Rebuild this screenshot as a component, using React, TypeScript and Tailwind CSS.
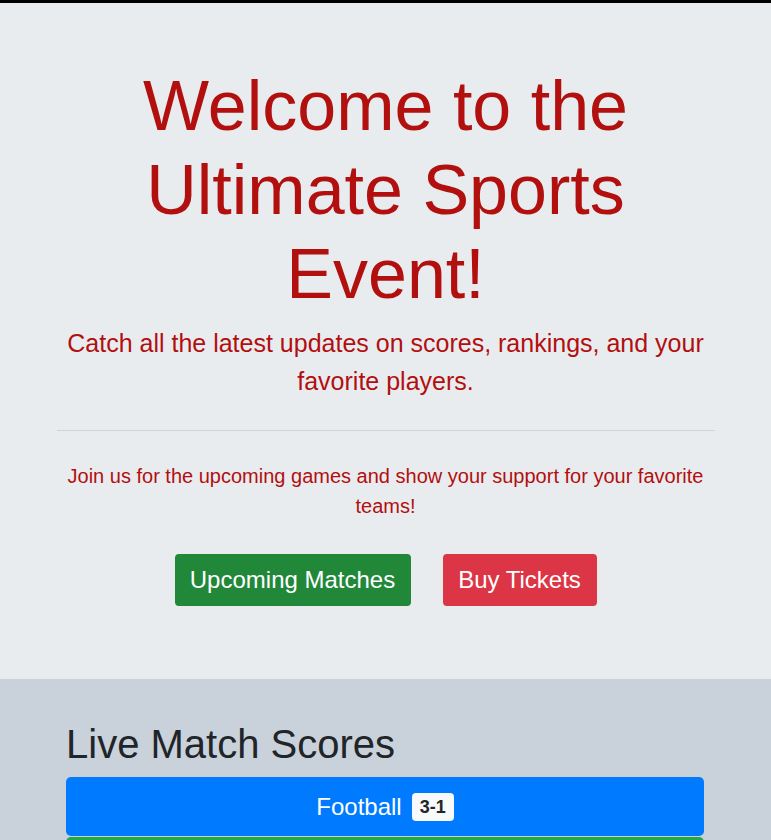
export default function App() {
  const font = { fontFamily: '"Liberation Sans", Arial, sans-serif' };
  return (
    <div style={font} className="w-full min-h-[840px] bg-[#c9d2da]">
      <div className="h-[3px] bg-black" />
      <section className="bg-[#e9ecef] pt-[61px] pb-[73px] flex flex-col items-center">
        <h1 className="w-[560px] text-center text-[70px] leading-[84px] text-[#b20f0f] font-normal">
          Welcome to the Ultimate Sports Event!
        </h1>
        <p className="mt-[9px] w-[660px] text-center text-[25px] leading-[37.5px] text-[#b20f0f]">
          Catch all the latest updates on scores, rankings, and your favorite players.
        </p>
        <hr className="mt-[30px] w-[658px] border-0 h-px bg-[#d1d4d7]" />
        <p className="mt-[30px] w-[660px] text-center text-[20px] leading-[30px] text-[#b20f0f]">
          Join us for the upcoming games and show your support for your favorite teams!
        </p>
        <div className="mt-[33px] flex gap-[32px]">
          <button className="w-[236px] h-[52px] rounded-[4px] bg-[#21883a] text-white text-[24px] leading-[36px]">
            Upcoming Matches
          </button>
          <button className="w-[154px] h-[52px] rounded-[4px] bg-[#dc3545] text-white text-[24px] leading-[36px]">
            Buy Tickets
          </button>
        </div>
      </section>
      <section className="pl-[66px] pr-[67px] pt-[41px]">
        <h2 className="text-[40px] leading-[48px] text-[#212529] font-normal">Live Match Scores</h2>
        <div className="mt-[9px] h-[59px] rounded-[5px] bg-[#007bff] flex items-center justify-center gap-[10px]">
          <span className="text-white text-[24px] leading-[36px]">Football</span>
          <span className="h-[28px] px-2 rounded-[4px] bg-[#f8f9fa] text-[#212529] text-[18px] font-bold leading-[28px]">
            3-1
          </span>
        </div>
        <div className="mt-px h-[59px] rounded-[5px] bg-[#28a745]" />
      </section>
    </div>
  );
}
